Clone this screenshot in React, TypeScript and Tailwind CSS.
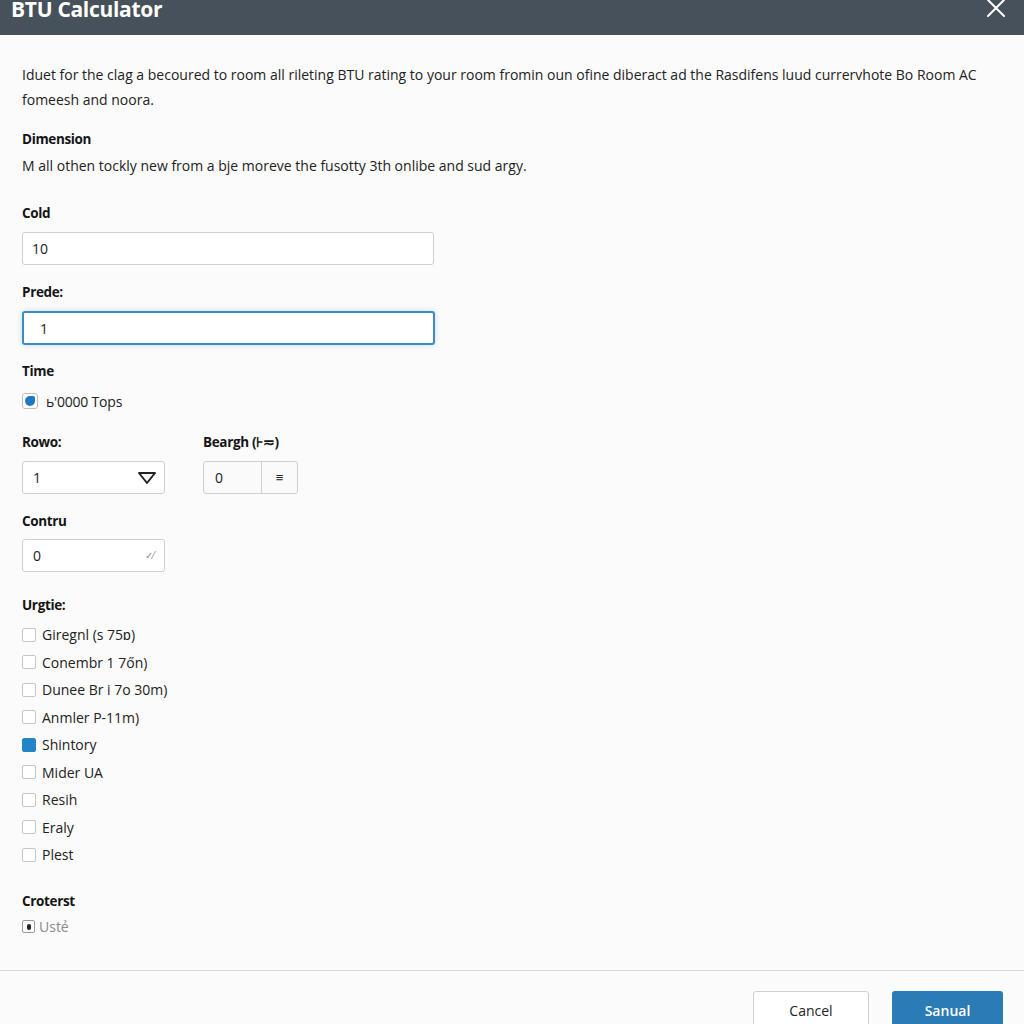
import React from 'react';

const options = [
  { label: 'Giregnl (s 75ɒ)', checked: false },
  { label: 'Conembr 1 7őn)', checked: false },
  { label: 'Dunee Br i 7o 30m)', checked: false },
  { label: 'Anmler P-11m)', checked: false },
  { label: 'Shintory', checked: true },
  { label: 'Mider UA', checked: false },
  { label: 'Resih', checked: false },
  { label: 'Eraly', checked: false },
  { label: 'Plest', checked: false },
];

function Label({ children, className = '' }: { children: React.ReactNode; className?: string }) {
  return <div className={`text-[13.5px] font-bold leading-[20px] tracking-[-0.35px] text-[#151515] ${className}`}>{children}</div>;
}

export default function App() {
  return (
    <div className="flex h-[1024px] w-[1024px] flex-col overflow-hidden bg-[#fbfbfb] font-['Open_Sans',sans-serif] text-[#222]">
      <header className="flex h-[35px] shrink-0 items-start justify-between overflow-hidden bg-[#47515b] pl-[11px] pr-[18px]">
        <h1 className="-mt-[4px] text-[21px] font-bold leading-[26px] tracking-[-0.3px] text-white">BTU Calculator</h1>
        <svg width="20" height="20" viewBox="0 0 20 20" className="-mt-[2px]">
          <path d="M2 2 L18 18 M18 2 L2 18" stroke="white" strokeWidth="2" strokeLinecap="round" />
        </svg>
      </header>

      <main className="flex flex-col pl-[22px]">
        <p className="mt-[27px] w-[975px] text-[14px] leading-[25px]">
          Iduet for the clag a becoured to room all rileting BTU rating to your room fromin oun ofine diberact ad the Rasdifens luud currervhote Bo Room AC fomeesh and noora.
        </p>

        <Label className="mt-[17px]">Dimension</Label>
        <p className="mt-[7px] text-[14px] leading-[20px]">
          M all othen tockly new from a bje moreve the fusotty 3th onlibe and sud argy.
        </p>

        <Label className="mt-[27px]">Cold</Label>
        <div className="mt-[9px] flex h-[33px] w-[412px] items-center rounded-[3px] border border-[#cfcfcf] bg-white pl-[9px] text-[14px]">10</div>

        <Label className="mt-[17px]">Prede:</Label>
        <div className="mt-[9px] flex h-[34px] w-[413px] items-center rounded-[3px] border-2 border-[#3b8bc4] bg-white pl-[16px] text-[14px] shadow-[0_0_6px_rgba(59,139,196,0.25)]">1</div>

        <Label className="mt-[16px]">Time</Label>
        <div className="mt-[10px] flex h-[20px] items-center gap-[8px]">
          <span className="flex h-[16px] w-[16px] items-center justify-center rounded-[3px] border border-[#bdbdbd] bg-white">
            <span className="h-[10px] w-[10px] rounded-[5px_2px_5px_5px] bg-[#1f78c1]" />
          </span>
          <span className="text-[14px] tracking-[-0.2px]">ь'0000 Tops</span>
        </div>

        <div className="mt-[21px] flex gap-[38px]">
          <div className="flex flex-col">
            <Label>Rowo:</Label>
            <div className="mt-[9px] flex h-[33px] w-[143px] items-center justify-between rounded-[3px] border border-[#cfcfcf] bg-white pl-[10px] pr-[7px] text-[14px]">
              <span>1</span>
              <svg width="20" height="14" viewBox="0 0 20 14">
                <path d="M2 2 L18 2 L10 12 Z" fill="none" stroke="#222" strokeWidth="2" strokeLinejoin="round" />
              </svg>
            </div>
          </div>
          <div className="flex flex-col">
            <Label>Beargh (⊦≂)</Label>
            <div className="mt-[9px] flex h-[33px] w-[95px] rounded-[3px] border border-[#cfcfcf] bg-[#fafafa] text-[14px]">
              <span className="flex w-[58px] items-center border-r border-[#cfcfcf] pl-[11px]">0</span>
              <span className="flex flex-1 items-center justify-center text-[13px]">≡</span>
            </div>
          </div>
        </div>

        <Label className="mt-[17px]">Contru</Label>
        <div className="mt-[8px] flex h-[33px] w-[143px] items-center justify-between rounded-[3px] border border-[#cfcfcf] bg-white pl-[10px] pr-[10px] text-[14px]">
          <span>0</span>
          <span className="text-[10px] text-[#888]">✓⁄</span>
        </div>

        <Label className="mt-[23px]">Urgtie:</Label>
        <div className="mt-[6px] flex flex-col">
          {options.map((o) => (
            <div key={o.label} className="flex h-[27.5px] items-center gap-[6px]">
              <span
                className={`h-[14px] w-[14px] rounded-[2px] border ${o.checked ? 'border-[#2384c6] bg-[#2384c6]' : 'border-[#c6c6c6] bg-white'}`}
              />
              <span className="text-[14px]">{o.label}</span>
            </div>
          ))}
        </div>

        <Label className="mt-[22px]">Croterst</Label>
        <div className="mt-[6px] flex h-[20px] items-center gap-[4px]">
          <span className="flex h-[13px] w-[13px] items-center justify-center rounded-[2px] border border-[#9a9a9a] bg-white">
            <span className="h-[6px] w-[4px] rounded-full bg-[#222]" />
          </span>
          <span className="text-[14px] text-[#8a8a8a]">Ustẻ</span>
        </div>
      </main>

      <footer className="mt-[33px] flex justify-end gap-[23px] border-t border-[#d9d9d9] pr-[21px] pt-[20px]">
        <button className="flex h-[42px] w-[116px] items-center justify-center rounded-[3px] border border-[#cfcfcf] bg-white pb-[2px] text-[14px] text-[#222]">
          Cancel
        </button>
        <button className="flex h-[42px] w-[111px] items-center justify-center rounded-[3px] bg-[#2a7bb6] pb-[2px] text-[14px] font-semibold text-white">
          Sanual
        </button>
      </footer>
    </div>
  );
}
